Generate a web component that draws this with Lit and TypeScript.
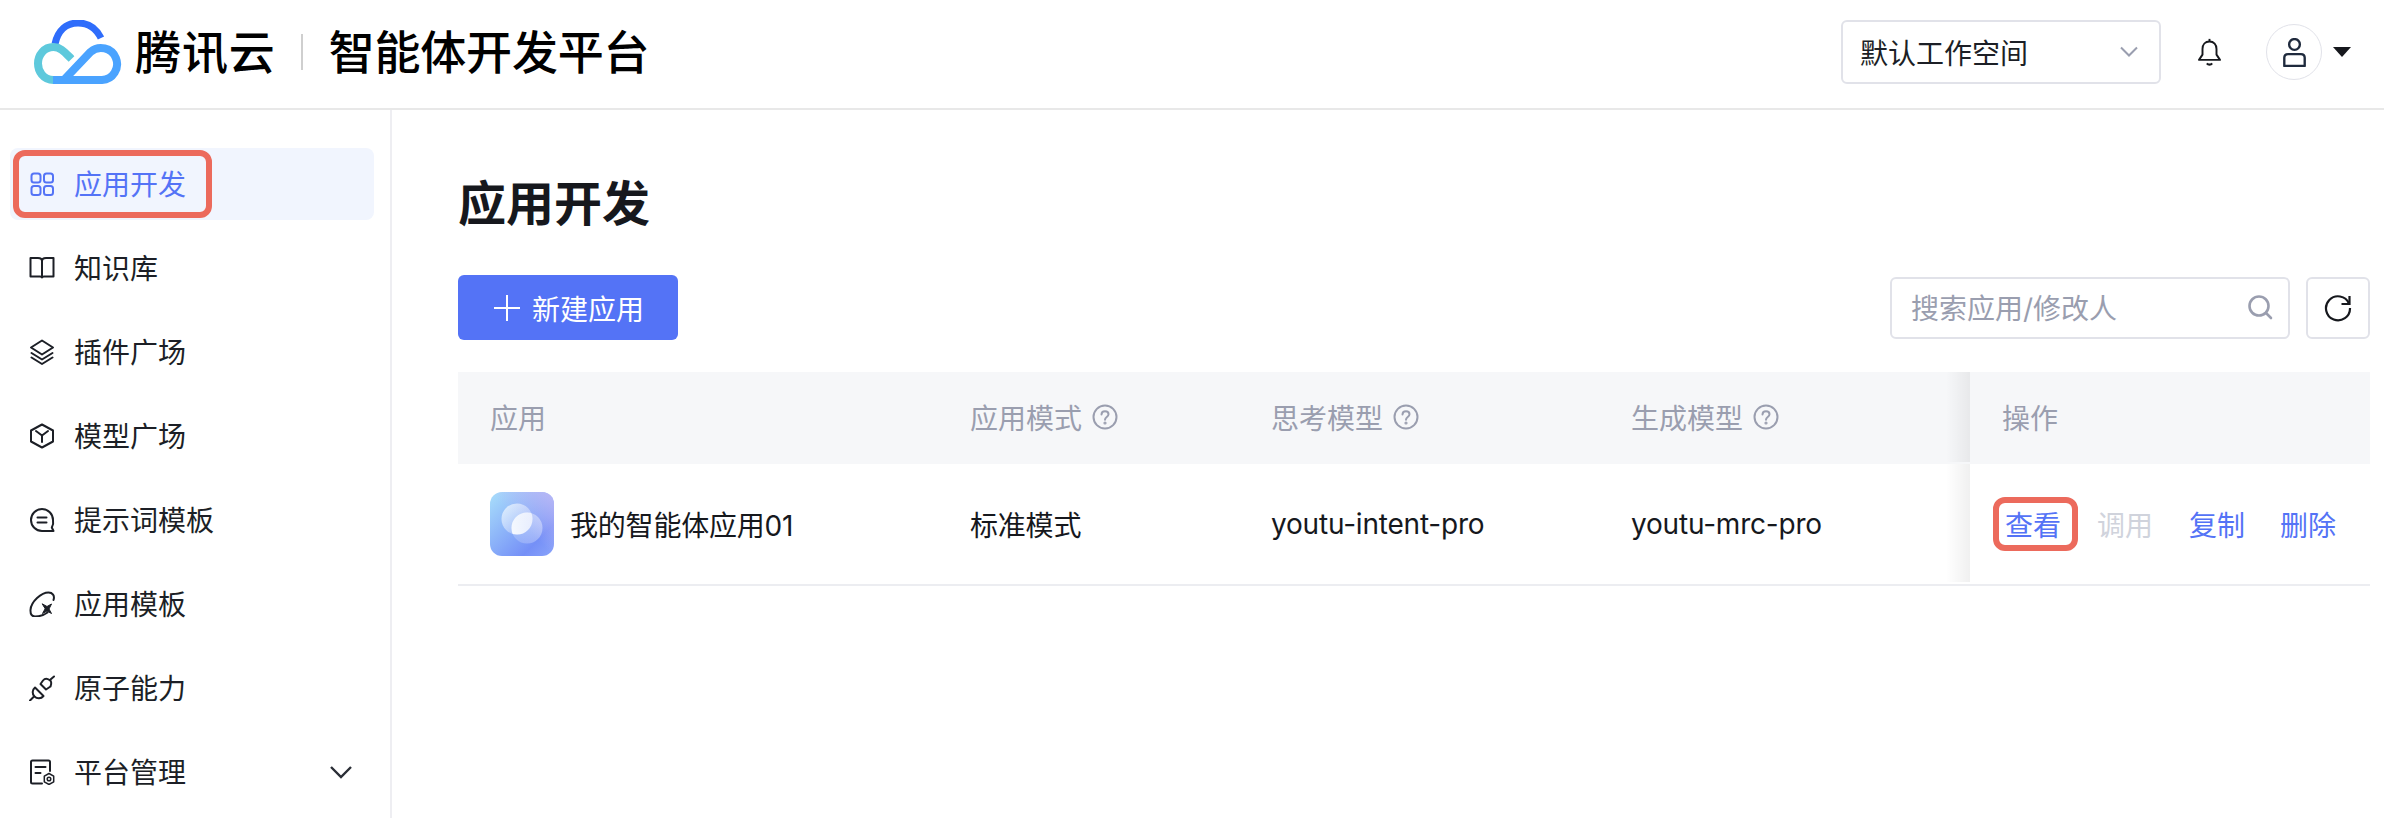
import { LitElement, html, css } from "lit";
import { customElement } from "lit/decorators.js";

const ic = (body: unknown) => html`<svg class="ic" viewBox="0 0 26 26" fill="none" stroke="currentColor" stroke-width="2" stroke-linecap="round" stroke-linejoin="round">${body}</svg>`;

const navItems = [
  {
    label: "知识库",
    icon: ic(html`<svg><path d="M1.500 3H9c2 0 4 1 4 3 0-2 2-3 4-3h7.500v18.500H15c-1 0-2 .5-2 1 0-.5-1-1-2-1H1.500z"/><path d="M13 6v16"/></svg>`),
  },
  {
    label: "插件广场",
    icon: ic(html`<svg><path d="M13 1.500 24 8.500l-11 7-11-7z"/><path d="M2.500 14 13 20.500 23.500 14"/><path d="M2.500 18.500 13 25l10.500-6.500"/></svg>`),
  },
  {
    label: "模型广场",
    icon: ic(html`<svg><path d="M13 1.500 24 7.500v11l-11 6-11-6v-11z"/><path d="M7 8l6 4.500L19 8"/><path d="M13 12.500V19"/></svg>`),
  },
  {
    label: "提示词模板",
    icon: ic(html`<svg><path d="M13 2C6.900 2 2 6.900 2 13s4.900 11 11 11h11.500l-1.700-3.500C24 18.500 24.500 15.500 24 13 24 6.900 19.100 2 13 2z"/><path d="M8.500 10.500h9M8.500 15.500h9"/></svg>`),
  },
  {
    label: "应用模板",
    icon: ic(html`<svg><path d="M24.500 9C26 4.500 23.500 1.500 19.500 1.500 12.500 1.500 2 10.500 1.500 19 1.300 23.500 3 25.500 6 25.500c4.500 0 9-1.500 12.500-4"/><path d="M13.500 13l4.500 2.500 4.500-2.500-2.500 5 2.500 4.500-4.500-2.500-4.500 2.500 2.500-4.500z" fill="currentColor" stroke-width="1"/></svg>`),
  },
  {
    label: "原子能力",
    icon: ic(html`<svg><path d="M1 25.500l3.500-3.500"/><path d="M6 12.500l8.500 8.500C12 24 8 24 5.500 21.500 3 19 3 15 6 12.500z"/><path d="M11.500 9l5.500 5.500 4.500-3C23 8 22 5.500 20.500 5c-2-1.500-4.500-2-6.500.5z"/><path d="M21.500 4.500 25 1.500"/></svg>`),
  },
];

@customElement("app-root")
export class AppRoot extends LitElement {
  static styles = css`
    :host {
      display: block;
      width: 2384px;
      height: 818px;
      overflow: hidden;
      background: #fff;
      color: #16181d;
      font-family: Inter, "Noto Sans CJK SC", sans-serif;
      font-size: 28px;
    }
    .ic { width: 26px; height: 26px; flex: none; display: block; }

    /* top bar */
    .top {
      height: 110px;
      box-sizing: border-box;
      display: flex;
      align-items: center;
      padding: 0 33px 4px 34px;
      border-bottom: 2px solid #e8e8e8;
    }
    .logo { width: 88px; height: 64px; flex: none; margin-right: 13px; }
    .brand { font-size: 46px; line-height: 60px; letter-spacing: -0.2px; color: #000; font-weight: 500; }
    .brand.co { letter-spacing: 0.9px; }
    .sep { width: 2px; height: 36px; background: #cfcfcf; margin: 0 26px 0 25px; }
    .spacer { flex: 1; }
    .select {
      width: 320px;
      height: 64px;
      box-sizing: border-box;
      border: 2px solid #e1e2e9;
      border-radius: 6px;
      display: flex;
      align-items: center;
      justify-content: space-between;
      padding: 0 20px 0 17px;
      color: #1c1f26;
    }
    .chev { width: 20px; height: 12px; display: block; }
    .bell { width: 25px; height: 28px; margin-left: 36px; color: #16181d; display: block; }
    .avatar {
      width: 56px;
      height: 56px;
      box-sizing: border-box;
      border: 1px solid #e1e2e9;
      border-radius: 50%;
      margin-left: 44px;
      display: flex;
      align-items: center;
      justify-content: center;
    }
    .avatar svg { width: 23px; height: 29px; }
    .caret {
      width: 0;
      height: 0;
      border: 9px solid transparent;
      border-top: 10px solid #16181d;
      border-bottom: 0;
      margin-left: 11px;
    }

    .body { display: flex; height: 708px; }

    /* side menu */
    .side {
      width: 392px;
      box-sizing: border-box;
      flex: none;
      border-right: 2px solid #eeeef2;
      padding: 38px 16px 0 10px;
      display: flex;
      flex-direction: column;
      gap: 12px;
    }
    .item {
      height: 72px;
      border-radius: 8px;
      display: flex;
      align-items: center;
      gap: 19px;
      padding: 0 19px;
      color: #1c1f26;
    }
    .item span { padding-bottom: 2px; }
    .item.on {
      background: #f1f5fe;
      color: #5473f6;
      padding: 0;
    }
    .mark-side {
      display: flex;
      align-items: center;
      gap: 19px;
      height: 68px;
      width: 199px;
      box-sizing: border-box;
      margin-left: 3px;
      padding-left: 10px;
      border: 6px solid #ec6a5c;
      border-radius: 12px;
    }
    .item .grow { flex: 1; }

    /* main area */
    .main { flex: 1; padding: 0 14px 0 66px; }
    h1 {
      margin: 0;
      padding-top: 66px;
      height: 99px;
      box-sizing: content-box;
      font-size: 48px;
      line-height: 56px;
      font-weight: 700;
      color: #16181d;
    }
    .bar { display: flex; align-items: center; height: 65px; }
    .new {
      width: 220px;
      height: 65px;
      border-radius: 6px;
      background: #5473f6;
      color: #fff;
      display: flex;
      align-items: center;
      justify-content: center;
      gap: 12px;
      padding-left: 2px;
      box-sizing: border-box;
    }
    .new svg { width: 26px; height: 26px; }
    .search {
      width: 400px;
      height: 62px;
      box-sizing: border-box;
      border: 2px solid #e1e2e9;
      border-radius: 6px;
      display: flex;
      align-items: center;
      justify-content: space-between;
      padding: 0 15px 2px 19px;
      color: #9a9eaf;
    }
    .search svg { width: 26px; height: 26px; }
    .refresh {
      width: 64px;
      height: 62px;
      box-sizing: border-box;
      border: 2px solid #e1e2e9;
      border-radius: 6px;
      margin-left: 16px;
      display: flex;
      align-items: center;
      justify-content: center;
    }
    .refresh svg { width: 28px; height: 28px; }

    .table {
      margin-top: 32px;
      display: grid;
      grid-template-columns: 512px 301px 360px 339px 400px;
      grid-template-rows: 92px 122px;
    }
    .cell { display: flex; align-items: center; border-bottom: 2px solid #ecedf1; letter-spacing: -0.2px; white-space: nowrap; }
    .head { background: #f6f7f9; color: #9a9eaf; border-bottom: 0; gap: 10px; padding-bottom: 2px; letter-spacing: 0; }
    .first { padding-left: 32px; }
    .head svg { width: 26px; height: 26px; }
    .pin {
      padding-left: 32px;
      position: relative;
    }
    .pin::before {
      content: "";
      position: absolute;
      left: -24px;
      top: 0;
      bottom: 2px;
      width: 24px;
      background: linear-gradient(to left, rgba(0, 0, 0, 0.06), rgba(0, 0, 0, 0));
    }
    .app-pic { width: 64px; height: 64px; flex: none; margin-right: 16px; display: block; }
    .ops {
      padding-left: 23px;
      color: #5473f6;
      letter-spacing: 0;
    }
    .mark-op {
      box-sizing: border-box;
      width: 85px;
      height: 54px;
      border: 6px solid #ec6a5c;
      border-radius: 12px;
      display: flex;
      align-items: center;
      justify-content: center;
      padding-right: 5px;
      margin-right: 19px;
      flex: none;
    }
    .ops span { margin-right: 35px; flex: none; }
    .ops .off { color: #d0d3dc; margin-right: 36px; }
  `;

  private help() {
    return html`<svg viewBox="0 0 26 26" fill="none" stroke="#9a9eaf" stroke-width="2" stroke-linecap="round"><circle cx="13" cy="13" r="11.500"/><path d="M9.500 10.500c0-2 1.500-3.300 3.500-3.300s3.500 1.300 3.500 3.100c0 2.700-3.500 2.800-3.500 5.400"/><circle cx="13" cy="19" r=".6" fill="#9a9eaf"/></svg>`;
  }

  render() {
    return html`
      <div class="top">
        <svg class="logo" viewBox="0 0 88 64" fill="none" stroke-width="8">
          <path d="M21 24C24 10 33 3 44 3c10 0 18 5 23 15" stroke="#2f6dfb" stroke-width="7"/>
          <path d="M19.500 60C9 60 4 51 4 43.500 4 35 10 27 19.500 27c7 0 11 5 18 12" stroke="#5ec9dc"/>
          <path d="M19 60H68A16 16 0 1 0 56.500 32L27 63" stroke="#4aa3ff"/>
        </svg>
        <span class="brand co">腾讯云</span>
        <div class="sep"></div>
        <span class="brand">智能体开发平台</span>
        <div class="spacer"></div>
        <div class="select">
          默认工作空间
          <svg class="chev" viewBox="0 0 20 12" fill="none" stroke="#9a9eaf" stroke-width="2"><path d="M2 1.500l8 8 8-8"/></svg>
        </div>
        <svg class="bell" viewBox="0 0 28 32" fill="none" stroke="currentColor" stroke-width="2.200" stroke-linejoin="round"><path d="M14 4c-5 0-8 3.500-8 8.500V19l-4 6h24l-4-6v-6.500C22 7.500 19 4 14 4z"/><path d="M14 1v3"/><path d="M11 29c1.500 2 4.500 2 6 0" stroke-width="2.500"/></svg>
        <div class="avatar">
          <svg viewBox="0 0 21 27" fill="none" stroke="#1f2a3d" stroke-width="2.200"><circle cx="10.500" cy="6" r="5"/><path d="M4.500 15h12c2.500 0 3.500 1.500 3.500 3.500V26H1v-7.500C1 16.500 2 15 4.500 15z" stroke-linejoin="round"/></svg>
        </div>
        <div class="caret"></div>
      </div>
      <div class="body">
        <nav class="side">
          <div class="item on">
            <div class="mark-side">
              ${ic(html`<svg><rect x="2.500" y="2.500" width="9" height="9" rx="2.500"/><rect x="15" y="2.500" width="9" height="9" rx="2.500"/><rect x="2.500" y="15" width="9" height="9" rx="2.500"/><rect x="15" y="15" width="9" height="9" rx="2.500"/></svg>`)}
              <span>应用开发</span>
            </div>
          </div>
          ${navItems.map((n) => html`<div class="item">${n.icon}<span>${n.label}</span></div>`)}
          <div class="item">
            ${ic(html`<svg><path d="M13 24.500H3.500a1.500 1.500 0 0 1-1.500-1.500V3a1.500 1.500 0 0 1 1.500-1.500h16A1.500 1.500 0 0 1 21 3v9"/><path d="M6.500 8h10M6.500 14h5"/><circle cx="20" cy="20" r="1.800" stroke-width="1.500"/><path d="M20 14.500l4.700 2.700v5.600L20 25.500l-4.700-2.700v-5.600z" stroke-width="1.500"/></svg>`)}
            <span class="grow">平台管理</span>
            <svg width="24" height="14" viewBox="0 0 24 14" fill="none" stroke="#2a2e36" stroke-width="2.400" style="margin-right:2px"><path d="M2 2l10 10L22 2"/></svg>
          </div>
        </nav>
        <div class="main">
          <h1>应用开发</h1>
          <div class="bar">
            <div class="new">
              <svg viewBox="0 0 26 26" fill="none" stroke="#fff" stroke-width="2"><path d="M13 0v26M0 13h26"/></svg>
              新建应用
            </div>
            <div class="spacer"></div>
            <div class="search">
              搜索应用/修改人
              <svg viewBox="0 0 26 26" fill="none" stroke="#9a9eaf" stroke-width="2.600" stroke-linecap="round"><circle cx="12" cy="12" r="9.500"/><path d="M19 19l5 5"/></svg>
            </div>
            <div class="refresh">
              <svg viewBox="0 0 28 28" fill="none" stroke="#16181d" stroke-width="2.200"><path d="M25 9.500A12 12 0 1 0 26 14"/><path d="M25.500 2v8h-8"/></svg>
            </div>
          </div>
          <div class="table">
            <div class="cell head first">应用</div>
            <div class="cell head">应用模式 ${this.help()}</div>
            <div class="cell head">思考模型 ${this.help()}</div>
            <div class="cell head">生成模型 ${this.help()}</div>
            <div class="cell head pin">操作</div>

            <div class="cell first">
              <svg class="app-pic" viewBox="0 0 64 64">
                <defs>
                  <linearGradient id="pg" x1="0" y1="0" x2="1" y2="1">
                    <stop offset="0" stop-color="#a9dffb"/>
                    <stop offset=".75" stop-color="#7590f7"/>
                    <stop offset="1" stop-color="#8aa4fa"/>
                  </linearGradient>
                  <linearGradient id="pt" x1="1" y1="0" x2="0" y2="1">
                    <stop offset="0" stop-color="#c0b8f5" stop-opacity=".9"/>
                    <stop offset=".5" stop-color="#c0b8f5" stop-opacity="0"/>
                  </linearGradient>
                  <linearGradient id="pa" x1="0" y1="0" x2="1" y2="1">
                    <stop offset="0" stop-color="#fff" stop-opacity=".7"/>
                    <stop offset="1" stop-color="#fff" stop-opacity=".1"/>
                  </linearGradient>
                  <linearGradient id="pb" x1="1" y1="0" x2="0" y2="1">
                    <stop offset="0" stop-color="#fff" stop-opacity=".45"/>
                    <stop offset="1" stop-color="#fff" stop-opacity=".15"/>
                  </linearGradient>
                  <linearGradient id="pl" x1="0" y1="1" x2="1" y2="0">
                    <stop offset="0" stop-color="#fff" stop-opacity=".95"/>
                    <stop offset="1" stop-color="#fff" stop-opacity=".45"/>
                  </linearGradient>
                  <clipPath id="ca"><circle cx="27" cy="27" r="15.500"/></clipPath>
                </defs>
                <rect width="64" height="64" rx="12" fill="url(#pg)"/>
                <rect width="64" height="64" rx="12" fill="url(#pt)"/>
                <circle cx="27" cy="27" r="15.500" fill="url(#pa)"/>
                <circle cx="37" cy="36" r="15.500" fill="url(#pb)"/>
                <circle cx="37" cy="36" r="15.500" fill="url(#pl)" clip-path="url(#ca)"/>
              </svg>
              我的智能体应用01
            </div>
            <div class="cell">标准模式</div>
            <div class="cell">youtu-intent-pro</div>
            <div class="cell">youtu-mrc-pro</div>
            <div class="cell pin ops">
              <div class="mark-op">查看</div>
              <span class="off">调用</span>
              <span>复制</span>
              <span>删除</span>
            </div>
          </div>
        </div>
      </div>
    `;
  }
}
